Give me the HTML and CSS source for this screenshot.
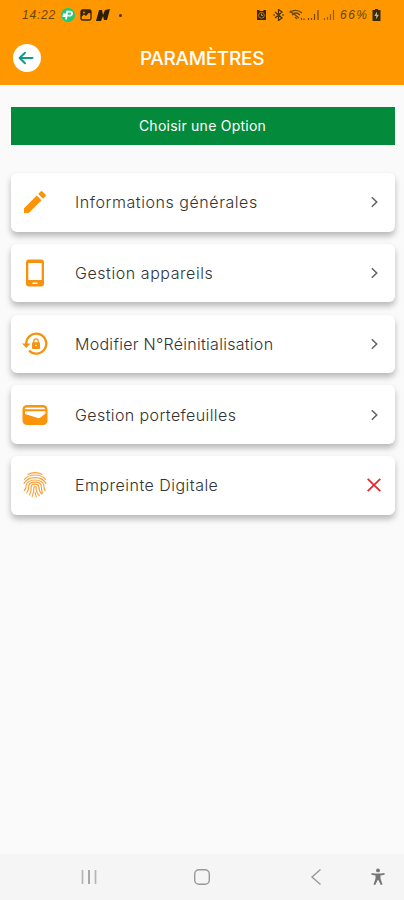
FILE: index.html
```html
<!DOCTYPE html>
<html lang="fr">
<head>
<meta charset="utf-8">
<meta name="viewport" content="width=device-width, initial-scale=1">
<title>Paramètres</title>
<link rel="stylesheet" href="styles.css">
</head>
<body>
<header class="top">
  <div class="status">
    <span class="clock">14:22</span>
    <svg class="s-app" width="14" height="14" viewBox="0 0 14 14"><circle cx="7" cy="7" r="7" fill="#20c77a"/><path d="M5 11.500 6.200 3.600h2.600c3.200 0 2.800 4-.3 4H5.800M2 6.400h3M1.500 8h3" fill="none" stroke="#fff" stroke-width="1.800"/></svg>
    <svg class="s-pic" width="12" height="12" viewBox="0 0 12 12"><rect x="1" y="1" width="10" height="10" rx="1.500" fill="none" stroke="#38260a" stroke-width="1.300"/><path d="M1 1h10v3.500L8.500 4 6 7 4 5.500 1 8z" fill="#38260a"/><circle cx="4" cy="3.500" r=".9" fill="#ff9800"/></svg>
    <svg class="s-n" width="14" height="12" viewBox="0 0 14 12"><path d="M0 12 3 1l3 0 1 5 2-5 5-1-3 11-3 0-1-4-2 5z" fill="#2c1d05"/></svg>
    <i class="dot"></i>
    <span class="grow"></span>
    <svg class="s-alarm" width="11" height="12" viewBox="0 0 11 12"><path d="M1 1h2l1 1h3l1-1h2v10H1z" fill="#38260a"/><circle cx="5.500" cy="6.300" r="2.900" fill="none" stroke="#d98206" stroke-width=".9"/><path d="M5.500 4.500v2h1.500" fill="none" stroke="#ff9800" stroke-width=".9"/></svg>
    <svg class="s-bt" width="11" height="12" viewBox="0 0 11 12"><path d="m2 3 7 6-3.500 2.500v-11L9 3 2 9M0 6h2m7 0h2" fill="none" stroke="#4a3008" stroke-width="1.200"/></svg>
    <svg class="s-net" width="46" height="12" viewBox="0 0 46 12" fill="none" stroke="#6b4507" stroke-width="1.200"><path d="M.5 3.500Q7-1 13 4M3 6q4-4 8 0M1 2l9 7M6 8l2 2M12.500 9v2M15 9.500v1.500"/><path d="M19.500 9v2M22.500 9v2M25.500 5v6M29 1v10" /><path d="M35.500 9v2M38.500 8v3M41.500 5v6M44.500 1v10" opacity=".7"/></svg>
    <span class="pct">66%</span>
    <svg class="s-bat" width="9" height="12" viewBox="0 0 9 12"><path d="M3 0h3v1h2.500v11H.5V1H3z" fill="#3a290b"/><path d="M5 2.500 2.300 7h2L3.800 10.500 7 5.800H5z" fill="#c5b58b"/></svg>
  </div>
  <div class="bar">
    <span class="back"><svg width="28" height="28" viewBox="0 0 28 28"><path d="M19.500 14H7M12 8.700 6.600 14l5.400 5.300" fill="none" stroke="#0b9c83" stroke-width="1.900" stroke-linecap="round" stroke-linejoin="round"/></svg></span>
    <h1>PARAMÈTRES</h1>
  </div>
</header>
<main>
  <div class="choose">Choisir une Option</div>
  <div class="card">
    <span class="icon"><svg width="30" height="30" viewBox="0 0 30 30" fill="#fb9408"><path d="M4 21.200v4.800h4.800L21.600 13.200l-4.800-4.800zM18.300 7l4.800 4.800 2.300-2.400c.6-.6.6-1.300 0-1.800l-3-3c-.5-.5-1.200-.5-1.800 0z"/></svg></span>
    <span class="label l1">Informations générales</span>
    <svg class="go" width="16" height="16" viewBox="0 0 16 16"><path d="m5.800 3.200 4.900 4.800-4.900 4.800"/></svg>
  </div>
  <div class="card">
    <span class="icon"><svg width="30" height="30" viewBox="0 0 30 30"><path fill-rule="evenodd" fill="#f6920d" d="M9 1.500h12a3 3 0 0 1 3 3v21a3 3 0 0 1-3 3H9a3 3 0 0 1-3-3v-21a3 3 0 0 1 3-3zM8.300 5v17h13.400V5zM12.500 24.600v1.500h5v-1.500z"/></svg></span>
    <span class="label l2">Gestion appareils</span>
    <svg class="go" width="16" height="16" viewBox="0 0 16 16"><path d="m5.800 3.200 4.900 4.800-4.900 4.800"/></svg>
  </div>
  <div class="card">
    <span class="icon"><svg width="30" height="30" viewBox="0 0 30 30"><path d="M6.300 15.500A10 10 0 1 1 9 21.500" fill="none" stroke="#f6920d" stroke-width="2.300"/><path d="M2 14.500h8.500L6.300 19z" fill="#f6920d"/><rect x="12" y="13.300" width="8" height="6.700" rx="1" fill="#f6920d"/><path d="M13.800 14v-2a2.200 2.200 0 0 1 4.400 0v2" fill="none" stroke="#f6920d" stroke-width="1.300"/><circle cx="16" cy="16.600" r=".8" fill="#fff"/></svg></span>
    <span class="label l3">Modifier N°Réinitialisation</span>
    <svg class="go" width="16" height="16" viewBox="0 0 16 16"><path d="m5.800 3.200 4.900 4.800-4.900 4.800"/></svg>
  </div>
  <div class="card">
    <span class="icon"><svg width="30" height="30" viewBox="0 0 30 30"><rect x="2.500" y="5" width="25" height="20" rx="4.500" fill="#fb9408"/><path d="M6.500 7.600h17q1.700 0 1.900 1.600H4.600q.2-1.600 1.900-1.600zM5 11.200h20.500v2.300l-5.300 4.300q-1 .7-2.300.3L5 14z" fill="#fff"/></svg></span>
    <span class="label l4">Gestion portefeuilles</span>
    <svg class="go" width="16" height="16" viewBox="0 0 16 16"><path d="m5.800 3.200 4.900 4.800-4.900 4.800"/></svg>
  </div>
  <div class="card">
    <span class="icon"><svg width="30" height="30" viewBox="0 0 30 30" fill="none" stroke="#f6a13a" stroke-width="1.150" stroke-linecap="round"><path d="M8 4.300q7-3.200 14 0M4.500 9.300Q8 5 15 5t10.500 4.300M4 13.500Q7 7.600 15 7.600T26 13.500M4.300 20.500Q6.200 18.500 6 16c.5-8 17.500-8 18 0q0 3 1 4.500M6.800 23q2-3 1.800-6.500c.5-5.800 12.300-5.800 12.800 0q0 4 1 6.500M9.500 25q2-4 1.700-8.300c.3-3.500 7.300-3.500 7.600 0q.2 4.800 3 7.300M12.200 26.500q2-4.500 1.700-9c.1-1.500 2.100-1.500 2.200 0q0 5 3.200 8.200M15.200 22.500q.3 2.500 1.200 4.500"/></svg></span>
    <span class="label l5">Empreinte Digitale</span>
    <svg class="off" width="16" height="16" viewBox="0 0 16 16"><path d="m1.700 1.800 12.600 12.400m0-12.400L1.700 14.200" fill="none" stroke="#e32626" stroke-width="1.700"/></svg>
  </div>
</main>
<nav>
  <svg class="n-recent" width="16" height="16" viewBox="0 0 16 16"><path d="M1.500 1v14M14.500 1v14" stroke="#b5b5b5" stroke-width="1.700"/><path d="M8 1v14" stroke="#999" stroke-width="1.700"/></svg>
  <svg class="n-home" width="18" height="18" viewBox="0 0 18 18"><rect x="1.700" y="1.700" width="14.600" height="14.600" rx="4.300" fill="none" stroke="#999" stroke-width="1.400"/></svg>
  <svg class="n-back" width="12" height="18" viewBox="0 0 12 18"><path d="M10.500 1.500 2 9l8.500 7.500" fill="none" stroke="#999" stroke-width="1.400"/></svg>
  <svg class="n-access" width="14" height="18" viewBox="0 0 14 18" fill="#777"><circle cx="7" cy="2.400" r="1.900"/><path d="M.5 5q6.500 1 13 0v1.700l-4 .7v3l2 6-1.700.6L7.300 12h-.6l-2.500 5-1.700-.6 2-6v-3l-4-.7z"/></svg>
</nav>
</body>
</html>
```

FILE: styles.css
```css
* { box-sizing: border-box; }
body {
  margin: 0;
  height: 900px;
  display: flex;
  flex-direction: column;
  background: #fafafa;
  font-family: Inter, "Open Sans", sans-serif;
  overflow: hidden;
}
svg { display: block; flex: none; }
.top { height: 85px; background: #ff9800; }
.status {
  height: 30px;
  padding: 0 23px 0 22px;
  display: flex;
  align-items: center;
  color: #68460d;
  font-family: "Liberation Sans", sans-serif;
  font-style: italic;
  font-size: 12px;
}
.clock { width: 39px; letter-spacing: 0.8px; }
.s-pic { margin-left: 5px; }
.s-n { margin-left: 4px; }
.dot { width: 3px; height: 3px; border-radius: 50%; background: #4a3008; margin-left: 9px; }
.grow { flex: 1; }
.s-bt { margin-left: 6px; }
.s-net { margin-left: 5px; }
.pct { width: 30px; margin-left: 5px; letter-spacing: 1.5px; }
.s-bat { margin-left: 2px; }
.bar { height: 55px; padding-left: 13px; display: flex; align-items: center; }
.back { width: 28px; height: 28px; border-radius: 50%; background: #fff; }
h1 {
  flex: 1;
  margin: 1px 41px 0 0;
  text-align: center;
  color: #fff;
  font-size: 19px;
  font-weight: 500;
  letter-spacing: -0.3px;
}
main { flex: 1; padding: 22px 9.5px 0 10.5px; display: flex; flex-direction: column; }
.choose {
  height: 38px;
  margin-bottom: 28px;
  padding-bottom: 1px;
  background: #048a3b;
  color: #fff;
  display: flex;
  align-items: center;
  justify-content: center;
  font-size: 14px;
  letter-spacing: 0.24px;
}
.card {
  height: 58.5px;
  margin-bottom: 12.3px;
  padding: 0 13px 0 9.5px;
  display: flex;
  align-items: center;
  background: #fff;
  border-radius: 6px;
  box-shadow: 0 4px 6px rgba(0, 0, 0, 0.27);
}
.icon { width: 55px; }
.label { flex: 1; color: #333; font-size: 16px; font-weight: 300; white-space: nowrap; }
.l1, .l2 { letter-spacing: 0.56px; }
.l3 { letter-spacing: 0.28px; }
.l4 { letter-spacing: 0.4px; }
.l5 { letter-spacing: 0.48px; }
.go path { fill: none; stroke: #666; stroke-width: 1.6; }
nav { height: 46px; background: #f5f5f5; display: flex; align-items: center; }
.n-recent { margin-left: 81px; }
.n-home { margin-left: 96px; }
.n-back { margin-left: 99px; }
.n-access { margin-left: 49px; }
```
